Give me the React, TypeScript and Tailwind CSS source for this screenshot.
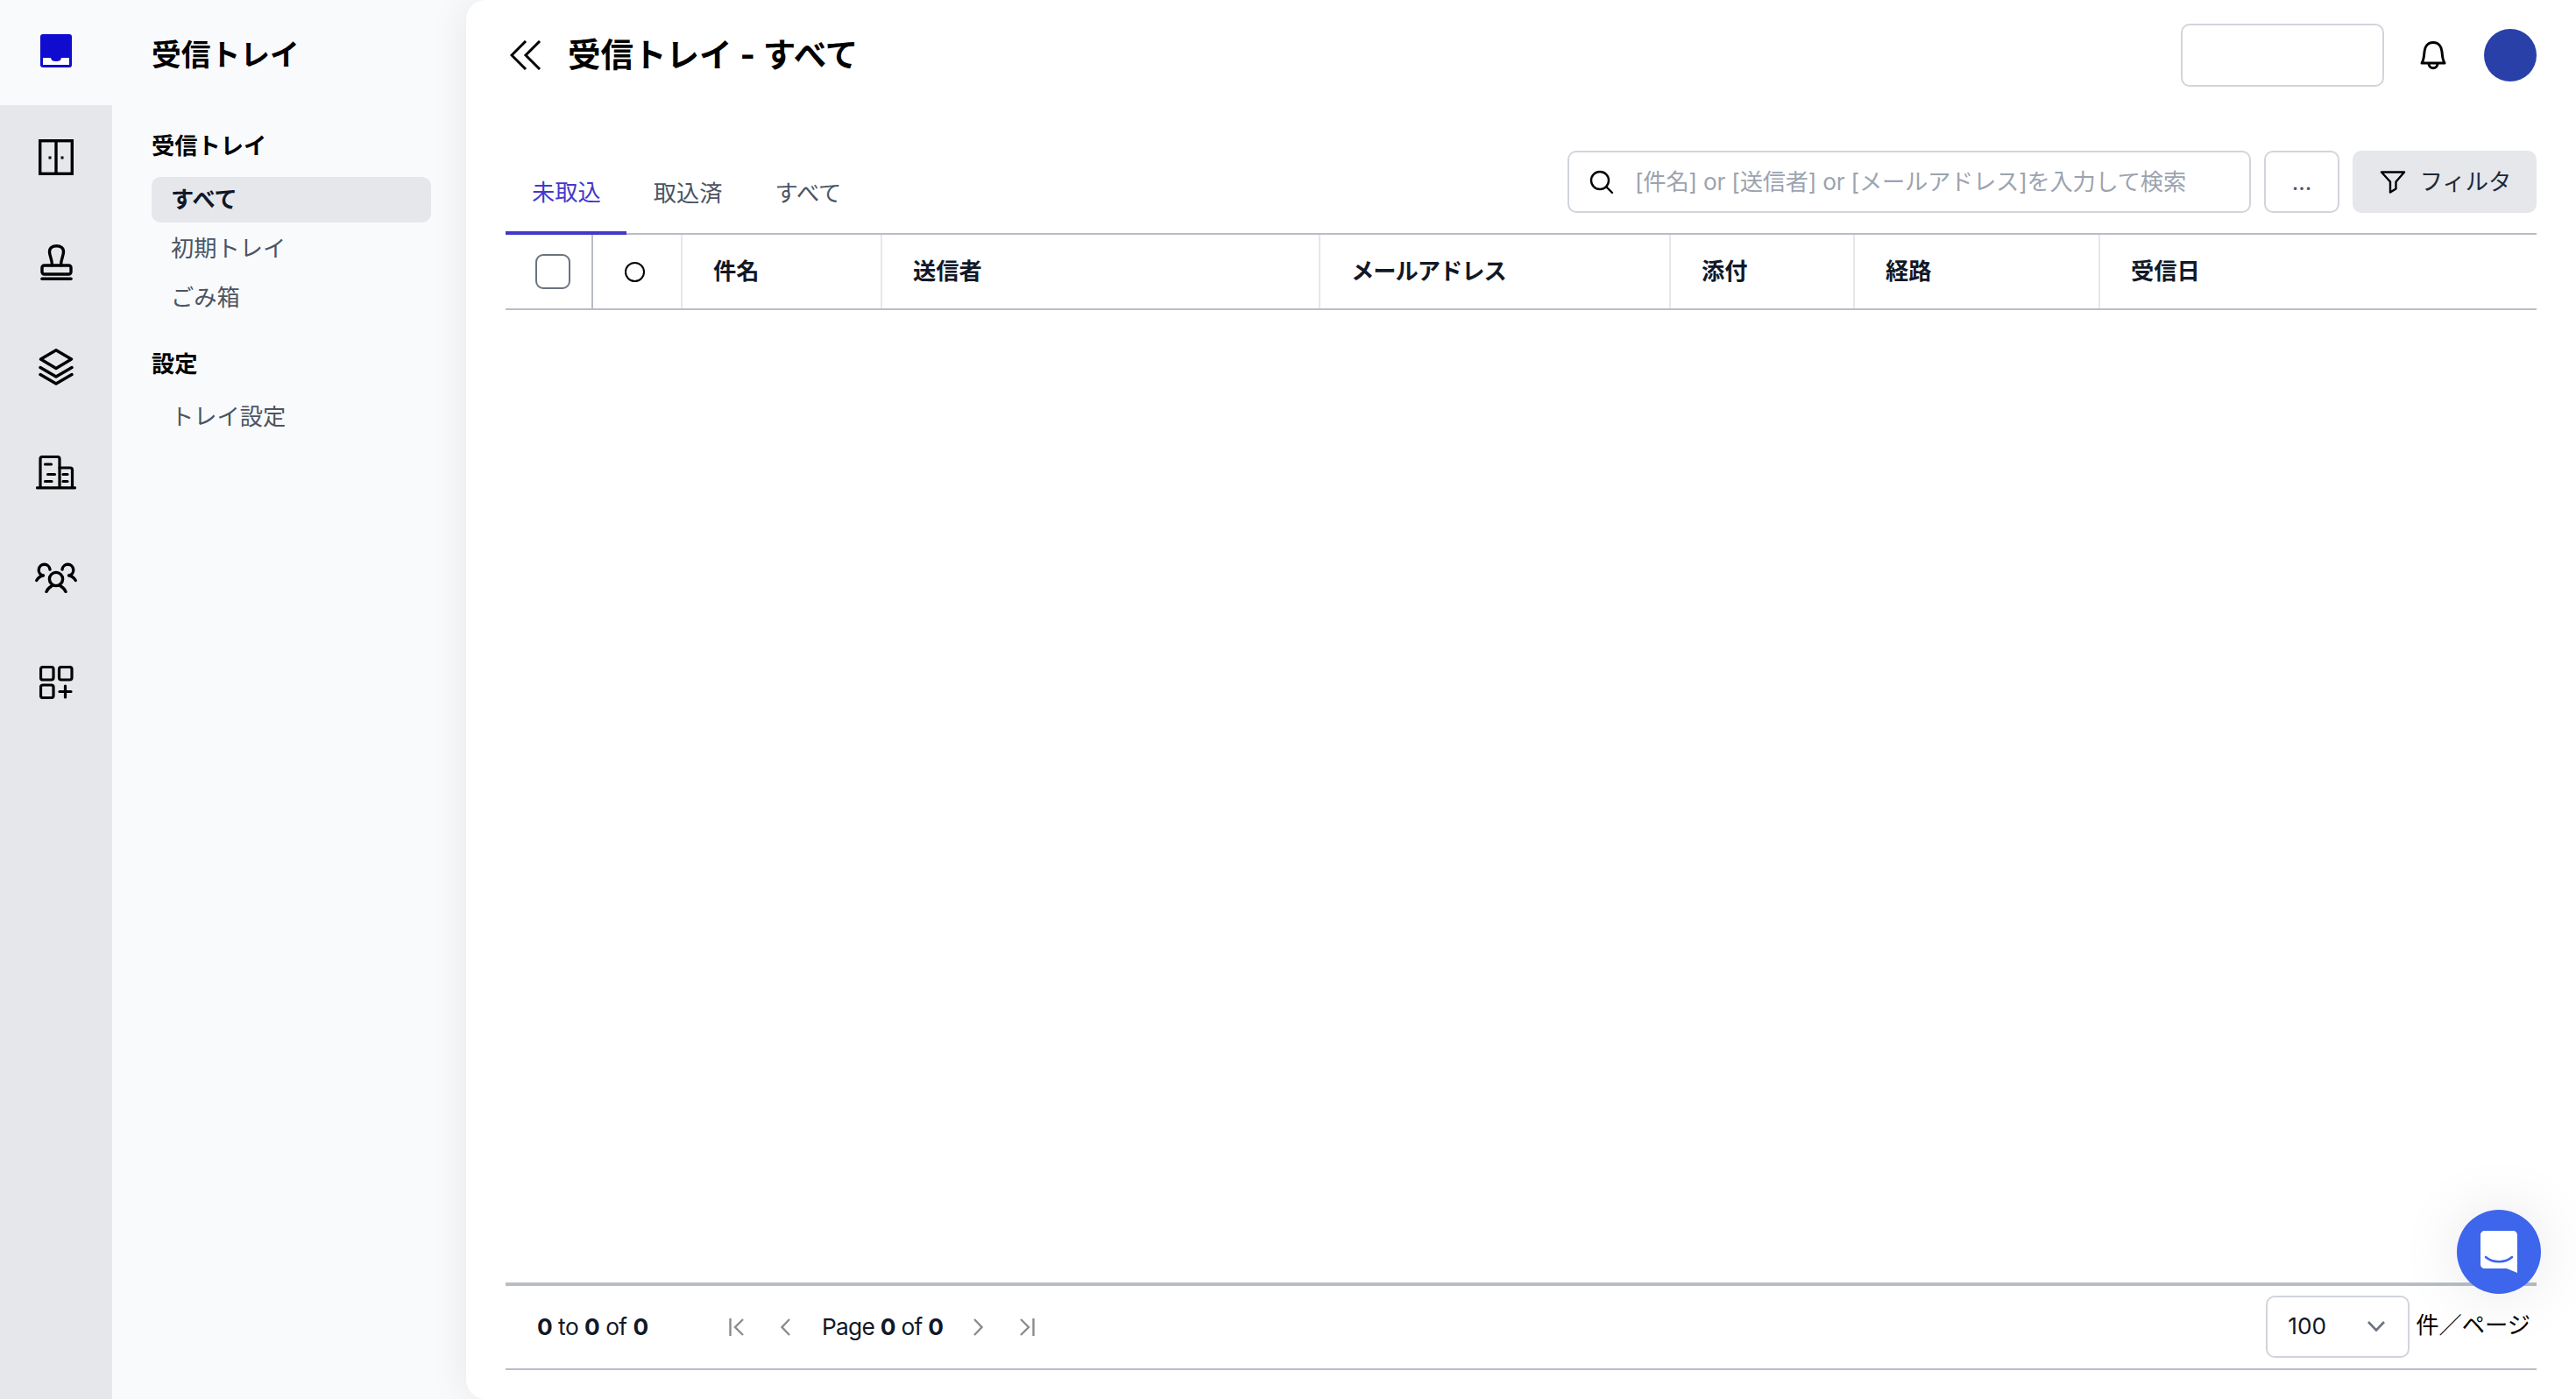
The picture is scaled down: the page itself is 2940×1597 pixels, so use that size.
const fontStack = "font-['Inter','Noto_Sans_CJK_JP',sans-serif]";

function DoorIcon() {
  return (
    <svg width="40" height="41" viewBox="0 0 40 41" fill="none" stroke="#000" strokeWidth="3.4">
      <rect x="1.7" y="1.7" width="36.6" height="37.6" />
      <path d="M20 2v37" />
      <path d="M11.5 21h3M25.5 21h3" strokeWidth="3" />
    </svg>
  );
}

function StampIcon() {
  return (
    <svg width="37" height="41" viewBox="0 0 37 41" fill="none" stroke="#000" strokeWidth="3.4" strokeLinecap="round" strokeLinejoin="round">
      <path d="M13.5 24C13.5 17 10.5 13 10.5 8.5C10.5 4 14 1.7 18.5 1.7C23 1.7 26.5 4 26.5 8.5C26.5 13 23.5 17 23.5 24" />
      <rect x="2" y="24" width="33" height="10" rx="2.5" />
      <path d="M2 39.2H35" strokeWidth="3.6" />
    </svg>
  );
}

function LayersIcon() {
  return (
    <svg width="40" height="42" viewBox="0 0 40 42" fill="none" stroke="#000" strokeWidth="3.4" strokeLinecap="round" strokeLinejoin="round">
      <path d="M20 1.8L37.5 12L20 22.5L2.5 12Z" />
      <path d="M2 21.5L20 32L38 21.5" />
      <path d="M2 29.5L20 40L38 29.5" />
    </svg>
  );
}

function BuildingIcon() {
  return (
    <svg width="46" height="39" viewBox="0 0 46 39" fill="none" stroke="#000" strokeWidth="3.2" strokeLinecap="round" strokeLinejoin="round">
      <path d="M5 36V4C5 2.5 6 1.5 7.5 1.5H24.5C26 1.5 27 2.5 27 4V36" />
      <path d="M27 14H39C40.5 14 41.5 15 41.5 16.5V36" />
      <path d="M1.5 36.8H44.5" />
      <path d="M10.5 10H17.5M13.5 21.5H21.5M10.5 29.5H18M31 21.5H36M31 29.5H36" />
    </svg>
  );
}

function PeopleIcon() {
  return (
    <svg width="48" height="35" viewBox="0 0 48 35" fill="none" stroke="#000" strokeWidth="3.4" strokeLinecap="round" strokeLinejoin="round">
      <circle cx="24" cy="19" r="7.6" />
      <path d="M13 33.5C14.5 29.5 18 27.5 19.5 26.5M35 33.5C33.5 29.5 30 27.5 28.5 26.5" />
      <path d="M17 8A6.4 6.4 0 1 0 9.5 15C6 15.5 3.5 17.5 1.8 20.5" />
      <path d="M31 8A6.4 6.4 0 1 1 38.5 15C42 15.5 44.5 17.5 46.2 20.5" />
    </svg>
  );
}

function GridPlusIcon() {
  return (
    <svg width="39" height="38" viewBox="0 0 39 38" fill="none" stroke="#000" strokeWidth="3.2" strokeLinecap="round">
      <rect x="1.5" y="1.5" width="14.5" height="14.5" rx="2.5" />
      <rect x="22.5" y="1.5" width="14.5" height="14.5" rx="2.5" />
      <rect x="1.5" y="22" width="14.5" height="14.5" rx="2.5" />
      <path d="M29.5 23V36M23 29.5H36" />
    </svg>
  );
}

function InboxLogo() {
  return (
    <svg width="36" height="38" viewBox="0 0 36 38">
      <rect width="36" height="38" rx="3" fill="#0f0bcf" />
      <path d="M3 27H12C12.5 30 14.5 31 18 31C21.5 31 23.5 30 24 27H33V35H3Z" fill="#fff" />
    </svg>
  );
}

function SideItem({ label, active }: { label: string; active?: boolean }) {
  return (
    <div
      className={
        active
          ? "flex h-[52px] items-center rounded-[10px] bg-[#e5e7eb] pl-[22px] text-[26.25px] font-semibold text-[#111827]"
          : "flex h-[52px] items-center rounded-[10px] pl-[22px] text-[26.25px] text-[#4b5563]"
      }
    >
      {label}
    </div>
  );
}

const railIcons = [DoorIcon, StampIcon, LayersIcon, BuildingIcon, PeopleIcon, GridPlusIcon];

const columns = [
  { label: "件名", width: "w-[228px]" },
  { label: "送信者", width: "w-[500px]" },
  { label: "メールアドレス", width: "w-[400px] tracking-[-1px]" },
  { label: "添付", width: "w-[210px]" },
  { label: "経路", width: "w-[280px]" },
  { label: "受信日", width: "flex-1" },
];

export default function App() {
  return (
    <div className={`flex h-screen w-full overflow-hidden bg-[#f9fafb] ${fontStack}`}>
      <nav className="flex w-[128px] shrink-0 flex-col">
        <div className="flex h-[120px] items-center justify-center pb-[4px]">
          <InboxLogo />
        </div>
        <div className="flex flex-1 flex-col bg-[#e5e7eb]">
          {railIcons.map((Icon, i) => (
            <div key={i} className="flex h-[119.8px] items-center justify-center">
              <Icon />
            </div>
          ))}
        </div>
      </nav>

      <aside className="flex w-[404px] shrink-0 flex-col pl-[45px] pr-[40px]">
        <div className="flex h-[126px] items-center text-[33.75px] font-bold text-black">受信トレイ</div>
        <div className="flex h-[76px] items-start pt-[22px] text-[26.25px] leading-[38px] font-bold text-black">受信トレイ</div>
        <div className="flex flex-col gap-[4px]">
          <SideItem label="すべて" active />
          <SideItem label="初期トレイ" />
          <SideItem label="ごみ箱" />
        </div>
        <div className="mt-[31px] flex h-[38px] items-center text-[26.25px] font-bold text-black">設定</div>
        <div className="mt-[15px]">
          <SideItem label="トレイ設定" />
        </div>
      </aside>

      <main className="relative flex min-w-0 flex-1 flex-col rounded-l-[22px] bg-white pb-[33px] pl-[45px] pr-[45px] shadow-[-4px_0_40px_rgba(0,0,0,0.07)]">
        <header className="flex h-[126px] shrink-0 items-center">
          <svg className="ml-[5px]" width="36" height="34" viewBox="0 0 36 34" fill="none" stroke="#000" strokeWidth="3">
            <path d="M18 1L2 17L18 33M34 1L18 17L34 33" />
          </svg>
          <h1 className="ml-[30px] text-[37.5px] font-bold text-black">受信トレイ - すべて</h1>
          <div className="ml-auto h-[72px] w-[232px] rounded-[10px] border-2 border-[#d1d5db]" />
          <svg className="ml-[41px]" width="30" height="33" viewBox="0 0 30 33" fill="none" stroke="#000" strokeWidth="3" strokeLinecap="round" strokeLinejoin="round">
            <path d="M2 25C4 22 4.5 19 5 12C5.5 6 9 1.5 15 1.5C21 1.5 24.5 6 25 12C25.5 19 26 22 28 25Z" />
            <path d="M10 25.5C10 32.5 20 32.5 20 25.5" />
          </svg>
          <div className="ml-[43px] h-[60px] w-[60px] rounded-full bg-[#2840a7]" />
        </header>

        <div className="flex h-[142px] shrink-0 items-end justify-between border-b-2 border-[#b9bdc7]">
          <div className="-mb-[2px] flex">
            <div className="flex h-[94px] items-center border-b-4 border-[#4338ca] pl-[30px] pr-[29px] pt-[2px] text-[26.25px] text-[#4338ca]">未取込</div>
            <div className="flex h-[94px] items-center pl-[31px] pr-[30px] text-[26.25px] text-[#4b5563]">取込済</div>
            <div className="flex h-[94px] items-center px-[30px] text-[26.25px] text-[#4b5563]">すべて</div>
          </div>
          <div className="mb-[23px] flex gap-[15px]">
            <div className="flex h-[71px] w-[780px] items-center rounded-[10px] border-2 border-[#d1d5db] pl-[23px]">
              <svg width="28" height="28" viewBox="0 0 28 28" fill="none" stroke="#000" strokeWidth="2.4" strokeLinecap="round">
                <circle cx="12" cy="12" r="10" />
                <path d="M19.5 19.5L26 26" />
              </svg>
              <span className="ml-[24px] text-[26.25px] tracking-[-0.22px] text-[#9ca3af]">[件名] or [送信者] or [メールアドレス]を入力して検索</span>
            </div>
            <div className="flex h-[71px] w-[86px] items-center justify-center rounded-[10px] border-2 border-[#d1d5db] text-[26.25px] text-[#4b5563]">...</div>
            <div className="flex h-[71px] w-[210px] items-center justify-center gap-[17px] rounded-[10px] bg-[#e5e7eb] text-[26.25px] text-[#1f2937]">
              <svg className="ml-[2px]" width="30" height="26" viewBox="0 0 30 26" fill="none" stroke="#000" strokeWidth="2.4" strokeLinejoin="round">
                <path d="M2 1.5H28L18.5 12.5V20.5L12 24.5V12.5Z" />
              </svg>
              <span className="-ml-[1px]">フィルタ</span>
            </div>
          </div>
        </div>

        <div className="flex h-[86px] shrink-0 items-stretch border-b-2 border-[#b9bdc7]">
          <div className="flex w-[100px] items-center border-r-2 border-[#b9bdc7] pl-[34px]">
            <div className="h-[40px] w-[40px] rounded-[9px] border-2 border-[#6b7280]" />
          </div>
          <div className="flex w-[102px] items-center justify-center border-r-2 border-[#e5e7eb] pr-[6px]">
            <div className="h-[23px] w-[23px] rounded-full border-2 border-black" />
          </div>
          {columns.map((col, i) => (
            <div
              key={col.label}
              className={`flex items-center pl-[35px] text-[26.25px] font-semibold text-[#111827] ${col.width} ${i < columns.length - 1 ? "border-r-2 border-[#e5e7eb]" : ""}`}
            >
              {col.label}
            </div>
          ))}
        </div>

        <div className="flex-1" />

        <footer className="flex h-[100px] shrink-0 items-center border-t-4 border-b-2 border-[#b9bdc7] text-[26.25px] text-[#111827]">
          <span className="ml-[36px] w-[219px] tracking-[-0.5px]">
            <b className="font-bold">0</b> to <b className="font-bold">0</b> of <b className="font-bold">0</b>
          </span>
          <svg width="17" height="20" viewBox="0 0 17 20" fill="none" stroke="#8c8c8c" strokeWidth="2.4">
            <path d="M1.5 0V20M16 1L7 10L16 19" />
          </svg>
          <svg className="ml-[42px]" width="11" height="20" viewBox="0 0 11 20" fill="none" stroke="#8c8c8c" strokeWidth="2.4">
            <path d="M10 1L1.5 10L10 19" />
          </svg>
          <span className="ml-[36px] tracking-[-0.7px]">
            Page <b className="font-bold">0</b> of <b className="font-bold">0</b>
          </span>
          <svg className="ml-[35px]" width="11" height="20" viewBox="0 0 11 20" fill="none" stroke="#8c8c8c" strokeWidth="2.4">
            <path d="M1 1L9.5 10L1 19" />
          </svg>
          <svg className="ml-[42px]" width="17" height="20" viewBox="0 0 17 20" fill="none" stroke="#8c8c8c" strokeWidth="2.4">
            <path d="M15.5 0V20M1 1L10 10L1 19" />
          </svg>
          <div className="-mt-[2px] ml-auto flex h-[71px] w-[164px] items-center justify-between rounded-[10px] border-2 border-[#d1d5db] pl-[23px] pr-[26px] text-[#111827]">
            100
            <svg width="20" height="12" viewBox="0 0 20 12" fill="none" stroke="#6b7280" strokeWidth="2.6">
              <path d="M1 1L10 10.5L19 1" />
            </svg>
          </div>
          <span className="ml-[7px] mr-[7px] -mt-[5px] text-black">件／ページ</span>
        </footer>

        <div className="absolute bottom-[120px] right-[40px] flex h-[96px] w-[96px] items-center justify-center rounded-full bg-[#3d66ec] shadow-[0_0_70px_rgba(0,0,0,0.1)]">
          <svg width="42" height="48" viewBox="0 0 42 48">
            <path d="M5 0H37C40 0 42 2 42 5V48L30 43H5C2 43 0 41 0 38V5C0 2 2 0 5 0Z" fill="#fff" />
            <path d="M6 30C14 37 28 37 36 30" fill="none" stroke="#3d66ec" strokeWidth="2.6" strokeLinecap="round" />
          </svg>
        </div>
      </main>
    </div>
  );
}
